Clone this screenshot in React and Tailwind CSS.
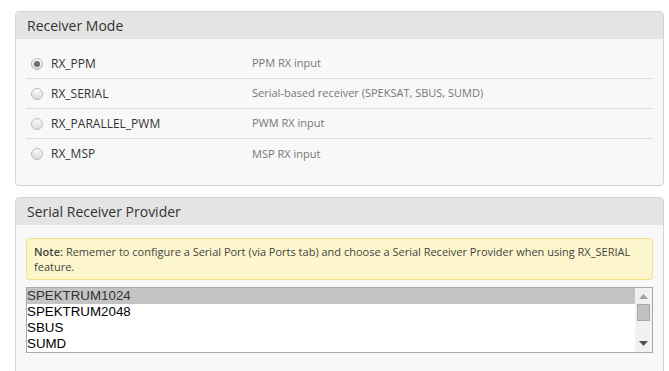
import React, { useState } from "react";

const modes = [
  { id: "RX_PPM", desc: "PPM RX input" },
  { id: "RX_SERIAL", desc: "Serial-based receiver (SPEKSAT, SBUS, SUMD)" },
  { id: "RX_PARALLEL_PWM", desc: "PWM RX input" },
  { id: "RX_MSP", desc: "MSP RX input" },
];

const providers = ["SPEKTRUM1024", "SPEKTRUM2048", "SBUS", "SUMD"];

const Radio = ({ checked }) => (
  <span className="flex h-[12px] w-[12px] items-center justify-center rounded-full border border-[#b9b9b9] bg-gradient-to-b from-[#fafafa] to-[#dcdcdc]">
    {checked && <span className="h-[6px] w-[6px] rounded-full bg-[#6e6e6e]" />}
  </span>
);

const Panel = ({ title, children, className }) => (
  <div
    className={`rounded-[4px] border border-[#d4d4d4] bg-[#f8f8f8] overflow-hidden ${className}`}
  >
    <div className="flex h-[27px] items-center bg-[#e4e4e4] px-[11px] text-[14px] text-[#333]">
      {title}
    </div>
    {children}
  </div>
);

export default function App() {
  const [mode, setMode] = useState("RX_PPM");
  const [provider, setProvider] = useState("SPEKTRUM1024");

  return (
    <div
      className="flex h-[371px] w-[669px] flex-col gap-[11px] bg-white pl-[15px] pr-[5px] pt-[11px]"
      style={{ fontFamily: "'Open Sans', sans-serif" }}
    >
      <Panel title="Receiver Mode" className="h-[175px] shrink-0">
        <div className="px-[10px] pt-[10px]">
          {modes.map((m, i) => (
            <div
              key={m.id}
              onClick={() => setMode(m.id)}
              className={`flex h-[30px] cursor-pointer items-center ${
                i < modes.length - 1 ? "border-b border-[#dcdcdc]" : ""
              }`}
            >
              <span className="ml-[5px] mr-[8px]">
                <Radio checked={mode === m.id} />
              </span>
              <span className="w-[201px] text-[12px] text-[#333]">{m.id}</span>
              <span className="text-[11px] text-[#777]">{m.desc}</span>
            </div>
          ))}
        </div>
      </Panel>

      <Panel title="Serial Receiver Provider" className="h-[178px] shrink-0 rounded-b-none">
        <div className="px-[10px] pt-[13px]">
          <div className="rounded-[3px] border border-[#f7e08a] bg-[#fdf6cc] px-[7px] py-[5px] text-[11px] leading-[15px] text-[#444]">
            <b className="font-semibold">Note:</b> Rememer to configure a Serial
            Port (via Ports tab) and choose a Serial Receiver Provider when using
            RX_SERIAL feature.
          </div>
          <div className="mt-[7px] flex h-[66px] border border-[#a9a9a9] bg-white">
            <div
              className="flex-1 text-[13.33px] leading-[16px] text-black"
              style={{ fontFamily: "'Liberation Sans', Arial, sans-serif" }}
            >
              {providers.map((p) => (
                <div
                  key={p}
                  onClick={() => setProvider(p)}
                  className={`h-[16px] cursor-default ${
                    provider === p ? "bg-[#c4c4c4] text-[#333]" : ""
                  }`}
                >
                  {p}
                </div>
              ))}
            </div>
            <div className="flex w-[17px] flex-col items-center bg-[#f1f1f1]">
              <svg width="9" height="5" viewBox="0 0 9 5" className="mt-[6px]">
                <path d="M0 5 L4.5 0 L9 5 Z" fill="#a3a3a3" />
              </svg>
              <div className="mt-[5px] h-[17px] w-[13px] border border-[#a8a8a8] bg-[#c1c1c1]" />
              <svg width="9" height="5" viewBox="0 0 9 5" className="mt-auto mb-[6px]">
                <path d="M0 0 L9 0 L4.5 5 Z" fill="#505050" />
              </svg>
            </div>
          </div>
        </div>
      </Panel>
    </div>
  );
}
